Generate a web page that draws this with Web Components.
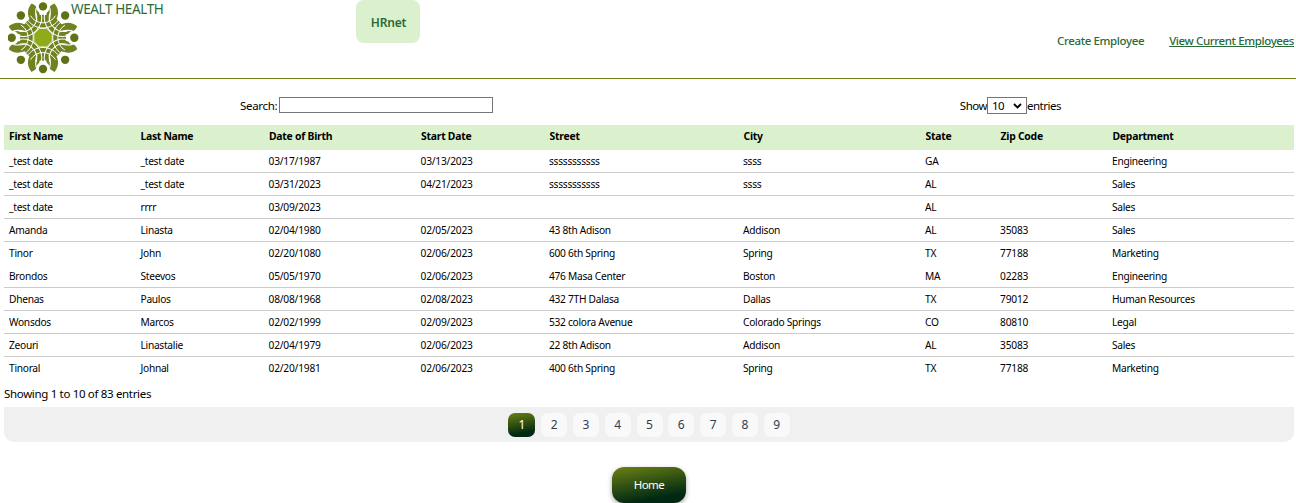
<!DOCTYPE html>
<html lang="en"><head><meta charset="utf-8"><title>HRnet</title>
<style>body{margin:0;background:#fff;color:#000;font-family:"Noto Sans","Open Sans",sans-serif;height:503px;overflow:hidden}</style></head>
<body><hr-app></hr-app>
<script>
const define=(name,html,init)=>customElements.define(name,class extends HTMLElement{
  constructor(){super();this.attachShadow({mode:'open'});}
  connectedCallback(){this.shadowRoot.innerHTML=html;if(init)init(this.shadowRoot,this);}
});

define('wealth-logo','<style>:host{display:block;width:71px;height:75px}svg{display:block}</style><svg width="71" height="75" viewBox="-35 -37.7 71 75"></svg>',root=>{
  let leaves='',arcs='',halos='',dots='';
  for(let k=0;k<8;k++){
    const a=k*45, flip=k%2?-1:1;
    leaves+=`<g transform="rotate(${a+22.5}) scale(${flip} 1)"><path d="M-5 -20C-7.500 -27 -6 -33 -2.500 -36C3.500 -33 6.500 -27 5 -20Z" fill="#6f8420"/><path d="M-5 -30Q-1.500 -25 -1 -18" fill="none" stroke="#fff" stroke-width="1.100"/></g>`;
    arcs+=`<g transform="rotate(${a})" fill="none" stroke="#fff" stroke-width="1"><path d="M-12.500 -22A14.500 14.500 0 0 0 12.500 -22"/><path d="M-16.300 -19A19 19 0 0 0 16.300 -19"/></g>`;
    halos+=`<circle transform="rotate(${a})" cy="-31" r="7" fill="#fff"/>`;
    dots+=`<circle transform="rotate(${a})" cy="-31.300" r="4.200" fill="#5f7316"/>`;
  }
  root.querySelector('svg').innerHTML='<circle r="23" fill="#6f8420"/>'+leaves+arcs+halos+'<path d="M-3.700 -9.200H3.700L9.200 -3.700V3.700L3.700 9.200H-3.700L-9.200 3.700V-3.700Z" fill="#90ab19" stroke="#fff" stroke-width=".8"/>'+dots;
});

define('hr-header',`<style>
:host{display:flex;height:78px;border-bottom:1px solid #6b8213;color:#2a6a38;padding-right:2px;padding-left:8px;align-items:flex-start}
.brand{width:348px;display:flex}
.brand span{font-size:13.500px;line-height:18px;letter-spacing:-.38px}
wealth-logo{margin-right:-8px}
.badge{width:64px;height:43px;border-radius:8px;background:#dbf1ce;display:grid;place-items:center;font-size:12px;font-weight:600;padding:2px 0 0 1px;box-sizing:border-box;letter-spacing:-.15px}
nav{margin-left:auto;display:flex;gap:25px;font-size:11.500px;font-weight:500;line-height:18px;padding-top:32px;letter-spacing:-.38px}
a{white-space:nowrap}.on{text-decoration:underline}
</style><div class="brand"><wealth-logo></wealth-logo><span>WEALT HEALTH</span></div><div class="badge">HRnet</div><nav><a>Create Employee</a><a class="on">View Current Employees</a></nav>`);

define('table-tools',`<style>
:host{display:flex;height:46px;box-sizing:border-box;padding:18px 235px 0 240px;justify-content:space-between;font-size:11.500px;line-height:18px;letter-spacing:-.33px}
div{display:flex}
.box{box-sizing:border-box;width:214px;height:16px;border:1px solid #767676;margin-left:2px}
.show{letter-spacing:-.5px}
.select{box-sizing:border-box;width:40px;height:17px;border:1px solid #767676;display:flex;align-items:center;justify-content:space-between;padding:0 4px;line-height:15px}
svg{display:block}
</style><div>Search:<span class="box"></span></div><div class="show">Show<span class="select">10<svg width="9" height="6" viewBox="0 0 9 6"><path d="M1 1L4.500 4.500L8 1" fill="none" stroke="#000" stroke-width="1.900"/></svg></span>entries</div>`);

const rows=[
['_test date','_test date','03/17/1987','03/13/2023','sssssssssss','ssss','GA','','Engineering'],
['_test date','_test date','03/31/2023','04/21/2023','sssssssssss','ssss','AL','','Sales'],
['_test date','rrrr','03/09/2023','','','','AL','','Sales'],
['Amanda','Linasta','02/04/1980','02/05/2023','43 8th Adison','Addison','AL','35083','Sales'],
['Tinor','John','02/20/1080','02/06/2023','600 6th Spring','Spring','TX','77188','Marketing'],
['Brondos','Steevos','05/05/1970','02/06/2023','476 Masa Center','Boston','MA','02283','Engineering'],
['Dhenas','Paulos','08/08/1968','02/08/2023','432 7TH Dalasa','Dallas','TX','79012','Human Resources'],
['Wonsdos','Marcos','02/02/1999','02/09/2023','532 colora Avenue','Colorado Springs','CO','80810','Legal'],
['Zeouri','Linastalie','02/04/1979','02/06/2023','22 8th Adison','Addison','AL','35083','Sales'],
['Tinoral','Johnal','02/20/1981','02/06/2023','400 6th Spring','Spring','TX','77188','Marketing']];
define('employee-table',`<style>
:host{display:block;margin:0 2px 0 4px}
.row{display:grid;grid-template-columns:131.500px 128px 152px 128.500px 194px 182px 75px 112px 1fr;padding-left:5px;height:23px;box-sizing:border-box;border-bottom:1px solid #ccc;font-size:10.200px;line-height:22px;letter-spacing:-.28px;white-space:nowrap}
.head{height:25px;line-height:23px;background:#dbf1ce;border:0;font-weight:700;font-size:10.400px;letter-spacing:-.3px}
.head span:nth-child(n+3){padding-left:.5px;letter-spacing:-.24px}
.plain{border-color:transparent}
.num{letter-spacing:-.2px}
</style><div class="row head"></div>`,root=>{
  const fill=(el,cells)=>cells.forEach(c=>{const s=document.createElement('span');s.textContent=c;if(/^\d[\d/]+$/.test(c))s.className='num';el.append(s);});
  fill(root.querySelector('.head'),['First Name','Last Name','Date of Birth','Start Date','Street','City','State','Zip Code','Department']);
  rows.forEach((r,i)=>{const d=document.createElement('div');d.className='row'+(i===4||i===9?' plain':'');fill(d,r);root.append(d);});
});

define('page-picker',`<style>
:host{display:block;margin:0 2px 0 4px}
.info{height:27px;line-height:28px;font-size:11.500px;letter-spacing:-.33px}
.bar{height:35px;box-sizing:border-box;background:#f0f0f0;border-radius:0 0 10px 10px;display:flex;justify-content:center;gap:5.800px;padding-top:6px}
.bar span{width:26px;height:24px;border-radius:7px;background:#f9f9f9;color:#2c3e50;text-align:center;font-size:12px;line-height:24px}
.bar .on{width:27px;color:#fff;background:linear-gradient(170deg,#6b8213,#002812 80%)}
</style><div class="info">Showing 1 to 10 of 83 entries</div><div class="bar"></div>`,root=>{
  root.querySelector('.bar').innerHTML=Array.from({length:9},(_,i)=>`<span${i?'':' class="on"'}>${i+1}</span>`).join('');
});

define('home-button',`<style>
:host{display:block;width:74px;height:36px;border-radius:12px;margin:25px auto 0 612px;background:linear-gradient(170deg,#6b8213,#002812 80%);box-shadow:0 2px 5px rgba(0,0,0,.35);color:#fff;text-align:center;font-size:11.500px;line-height:36px;letter-spacing:-.5px}
</style><slot></slot>`);

define('hr-app','<style>:host{display:block}</style><hr-header></hr-header><table-tools></table-tools><employee-table></employee-table><page-picker></page-picker><home-button>Home</home-button>');
</script></body></html>
